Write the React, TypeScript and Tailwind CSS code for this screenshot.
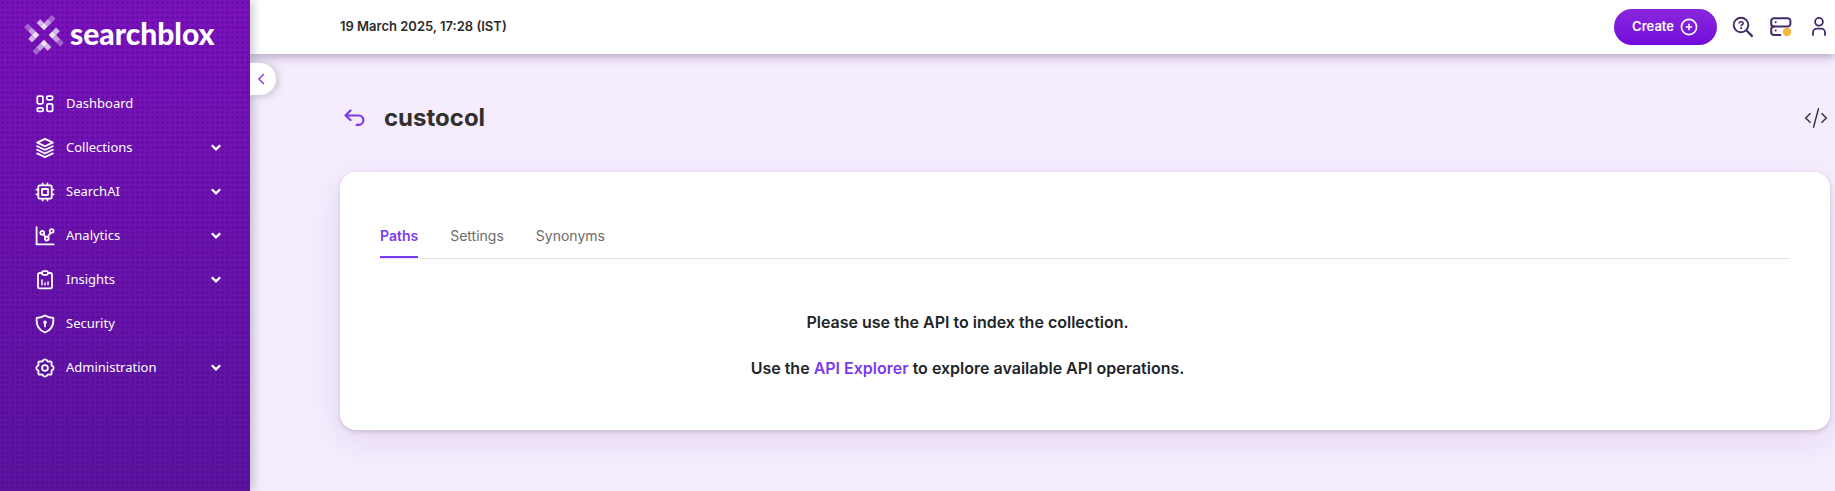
import { useState } from "react";
import type { ReactNode } from "react";

function NavIcon({ children }: { children: ReactNode }) {
  return (
    <svg
      viewBox="0 0 20 20"
      className="size-5 shrink-0"
      fill="none"
      stroke="currentColor"
      strokeWidth="1.8"
      strokeLinecap="round"
      strokeLinejoin="round"
      aria-hidden="true"
    >
      {children}
    </svg>
  );
}

const gear =
  "M8.4 1.900Q10 .9 11.600 1.900L12.600 3.300Q13 3.700 13.600 3.500L15 3.300Q16.700 3.300 16.700 5L16.500 6.400Q16.300 7 16.700 7.400L18.100 8.400Q19.100 10 18.100 11.600L16.700 12.600Q16.300 13 16.500 13.600L16.700 15Q16.700 16.700 15 16.700L13.600 16.500Q13 16.300 12.600 16.700L11.600 18.100Q10 19.100 8.400 18.100L7.400 16.700Q7 16.300 6.400 16.500L5 16.700Q3.300 16.700 3.300 15L3.500 13.600Q3.700 13 3.300 12.600L1.900 11.600Q.9 10 1.900 8.400L3.300 7.400Q3.700 7 3.500 6.400L3.300 5Q3.300 3.300 5 3.300L6.400 3.500Q7 3.700 7.400 3.300Z";

const items: { label: string; expandable: boolean; icon: ReactNode }[] = [
  {
    label: "Dashboard",
    expandable: false,
    icon: (
      <>
        <rect x="2.3" y="2.2" width="5.600" height="7.600" rx="1.200" />
        <rect x="11.800" y="2.2" width="5.800" height="3.600" rx="1.200" />
        <rect x="2.3" y="13.800" width="5.800" height="3.600" rx="1.200" />
        <rect x="12" y="9.800" width="5.600" height="7.600" rx="1.200" />
      </>
    ),
  },
  {
    label: "Collections",
    expandable: true,
    icon: (
      <>
        <path d="M10 .9 2.200 4.600 10 8.300l7.800-3.700z" />
        <path d="M2.200 8.200 10 11.900l7.800-3.700M2.200 11.800 10 15.500l7.800-3.700M2.200 15.400 10 19.100l7.800-3.700" />
      </>
    ),
  },
  {
    label: "SearchAI",
    expandable: true,
    icon: (
      <>
        <rect x="3.300" y="3.300" width="13.400" height="13.400" rx="1.600" />
        <rect x="7" y="7" width="6" height="6" rx=".4" />
        <path d="M7.600 3V1.400M12.400 3V1.400M7.600 18.600V17M12.400 18.600V17M3 7.600H1.400M3 12.400H1.400M18.600 7.600H17M18.600 12.400H17" />
      </>
    ),
  },
  {
    label: "Analytics",
    expandable: true,
    icon: (
      <>
        <path d="M1.600 1.200v17.200h17" />
        <circle cx="7.200" cy="6.800" r="1.900" />
        <circle cx="11.800" cy="12.600" r="1.900" />
        <circle cx="16.600" cy="5" r="1.900" />
        <path d="m8.400 8.400 2.300 2.600M12.800 10.800l2.800-4" />
      </>
    ),
  },
  {
    label: "Insights",
    expandable: true,
    icon: (
      <>
        <path d="M7 3H4.600A1.600 1.600 0 0 0 3 4.600v12.200a1.600 1.600 0 0 0 1.600 1.600h10.800a1.600 1.600 0 0 0 1.600-1.600V4.600A1.600 1.600 0 0 0 15.400 3H13" />
        <rect x="7" y="1.200" width="6" height="3.600" rx="1.800" />
        <path d="M7 10v4.800M10 13v1.800M13 12v2.800" strokeWidth="1.500" />
      </>
    ),
  },
  {
    label: "Security",
    expandable: false,
    icon: (
      <>
        <path d="M10 1.500c2.500 1.700 5 2.300 8.300 2.500.6 6.400-1.500 12-8.300 14.500C3.200 16 1.100 10.400 1.700 4 5 3.800 7.500 3.200 10 1.500z" />
        <circle cx="10" cy="8.200" r="1.800" fill="currentColor" stroke="none" />
        <path d="M10 9v3.400" />
      </>
    ),
  },
  {
    label: "Administration",
    expandable: true,
    icon: (
      <>
        <path d={gear} />
        <circle cx="10" cy="10" r="2.900" />
      </>
    ),
  },
];

function LogoMark() {
  return (
    <svg viewBox="-20 -20 40 40" className="size-10 shrink-0" fill="#fff" aria-hidden="true">
      {[0, 90, 180, 270].map((angle) => (
        <g key={angle} transform={`rotate(${angle})`}>
          <path d="M0-4.700-3.700-8.400 0-12.100 3.700-8.400z" opacity=".88" />
          <path d="M-3.700-8.400-7.400-12.100-3.700-15.800 0-12.100z" opacity=".7" />
          <path d="M3.700-8.400 0-12.100 3.900-16 7.600-12.300z" opacity=".6" />
          <path d="M7.600-12.300 3.900-16 7.800-19.900 11.500-16.200z" opacity=".35" />
        </g>
      ))}
    </svg>
  );
}

function Sidebar() {
  return (
    <aside className="relative z-20 w-[250px] shrink-0 bg-[radial-gradient(circle_at_center,rgba(70,0,150,0.4)_0_1px,transparent_1.5px),linear-gradient(#7a12ba,#5a149c)] bg-[size:5px_5px,100%_100%] text-white shadow-[2px_0_10px_rgba(0,0,0,0.25)]">
      <a href="#" aria-label="searchblox home" className="flex h-[70px] items-center gap-1.5 pl-6">
        <LogoMark />
        <span className="pb-1 font-['Lato',sans-serif] text-[30px] leading-9 font-black">searchblox</span>
      </a>
      <nav aria-label="Main" className="pt-3">
        <ul>
          {items.map((item) => (
            <li key={item.label}>
              <button
                type="button"
                className="flex h-11 w-full items-center gap-[11px] pr-7 pl-[35px] text-left font-['Noto_Sans',sans-serif] text-[13px]"
              >
                <NavIcon>{item.icon}</NavIcon>
                <span className="flex-1">{item.label}</span>
                {item.expandable && (
                  <svg viewBox="0 0 12 12" className="size-3" fill="none" stroke="currentColor" strokeWidth="2.200" aria-hidden="true">
                    <path d="m1.800 3.200 4.200 4.200 4.200-4.200" />
                  </svg>
                )}
              </button>
            </li>
          ))}
        </ul>
      </nav>
    </aside>
  );
}

function Header() {
  return (
    <header className="relative z-10 flex h-[54px] items-center justify-between bg-white pr-1 pl-[90px] shadow-[0_2px_10px_rgba(30,0,60,0.35)]">
      <time className="text-[13px] font-semibold text-[#2b2b2b]">19 March 2025, 17:28 (IST)</time>
      <div className="flex items-center text-[#432c6b]">
        <button
          type="button"
          className="mr-3.5 flex h-9 items-center gap-1.5 rounded-full bg-linear-to-b from-[#8a25dc] to-[#7309dc] pr-[19px] pl-[18px] text-[13px] font-semibold text-white"
        >
          Create
          <svg viewBox="0 0 18 18" className="size-[18px]" fill="none" stroke="currentColor" strokeWidth="1.600" aria-hidden="true">
            <circle cx="9" cy="9" r="7.600" />
            <path d="M9 5.800v6.400M5.800 9h6.400" />
          </svg>
        </button>
        <button type="button" aria-label="Search help" className="mr-3.5">
          <svg viewBox="0 0 24 24" className="size-6" fill="none" stroke="currentColor" strokeWidth="1.900" aria-hidden="true">
            <circle cx="10" cy="10" r="7.300" />
            <path d="m15.300 15.300 6.300 6.300" strokeWidth="2.200" />
            <path d="M8.100 8.500c0-2.300 4-2.300 4 0 0 1.300-2 1.200-2 2.700" strokeWidth="1.600" />
            <path d="M9.200 12.300H11V14H9.200z" fill="currentColor" stroke="none" />
          </svg>
        </button>
        <button type="button" aria-label="Server status" className="mr-3.5">
          <svg viewBox="0 0 24 24" className="size-6" fill="none" stroke="currentColor" strokeWidth="2" strokeLinecap="round" aria-hidden="true">
            <path d="M5 11.500a2.800 2.800 0 0 1-2.800-2.800V6A2.800 2.800 0 0 1 5 3.200h13.600A2.800 2.800 0 0 1 21.400 6v2.700a2.800 2.800 0 0 1-2.800 2.800z" />
            <path d="M5 11.500a2.800 2.800 0 0 0-2.800 2.800v2.900A2.800 2.800 0 0 0 5 20h6.400" />
            <path d="M6.600 7.300h.1M6.600 15.600h.1" strokeWidth="2" />
            <circle cx="18" cy="17" r="4.200" fill="#f4b740" stroke="none" />
          </svg>
        </button>
        <button type="button" aria-label="Account">
          <svg viewBox="0 0 24 24" className="size-6" fill="none" stroke="currentColor" strokeWidth="1.800" strokeLinecap="round" aria-hidden="true">
            <circle cx="12" cy="6.800" r="3.900" />
            <path d="M6 20v-2.500a3.800 3.800 0 0 1 3.800-3.800h4.400a3.800 3.800 0 0 1 3.800 3.800V20" />
          </svg>
        </button>
      </div>
    </header>
  );
}

const tabs = ["Paths", "Settings", "Synonyms"];

export default function App() {
  const [active, setActive] = useState("Paths");
  return (
    <div className="flex min-h-screen bg-[#f5ecfe] font-['Inter',sans-serif]">
      <Sidebar />
      <div className="relative min-w-0 flex-1">
        <Header />
        <button
          type="button"
          aria-label="Collapse menu"
          className="absolute top-[63px] left-0 z-30 flex h-8 w-[26px] items-center justify-center rounded-r-full bg-white pr-1 text-[#9333d8] shadow-[2px_1px_8px_rgba(0,0,0,0.2)]"
        >
          <svg viewBox="0 0 12 12" className="size-3" fill="none" stroke="currentColor" strokeWidth="1.400" aria-hidden="true">
            <path d="M8.900 1 3.900 6l5 5" />
          </svg>
        </button>
        <main className="pr-[5px] pb-12 pl-[90px]">
          <div className="flex h-[118px] items-center pt-2.5 pl-1">
            <a href="#" aria-label="Back" className="mr-4 text-[#7c3aed]">
              <svg viewBox="0 0 24 24" className="size-6" fill="none" stroke="currentColor" strokeWidth="2.200" strokeLinecap="round" strokeLinejoin="round" aria-hidden="true">
                <path d="M6.500 4.500 1.500 9.500l5 4.500M1.500 9.500h13.200a4.700 4.700 0 0 1 0 9.400h-2" />
              </svg>
            </a>
            <h1 className="flex-1 text-2xl font-bold text-[#303030]">custocol</h1>
            <button type="button" aria-label="View code" className="mr-0.5 text-[#303030]">
              <svg viewBox="0 0 24 24" className="size-6" fill="none" stroke="currentColor" strokeWidth="1.400" aria-hidden="true">
                <path d="M6.500 7.200 1.700 12l4.800 4.800M17.500 7.200l4.800 4.800-4.800 4.800M14.600 2.200 9.400 21.800" />
              </svg>
            </button>
          </div>
          <section className="rounded-2xl bg-white px-10 pt-11 pb-[50px] shadow-[0_10px_36px_rgba(60,20,100,0.09),0_2px_4px_rgba(60,40,80,0.18)]">
            <div role="tablist" className="flex gap-8 border-b border-[#e3e3e3] text-sm">
              {tabs.map((tab) => (
                <button
                  key={tab}
                  type="button"
                  role="tab"
                  aria-selected={active === tab}
                  onClick={() => setActive(tab)}
                  className={
                    active === tab
                      ? "h-[42px] border-b-2 border-[#7c3aed] font-semibold text-[#7c3aed]"
                      : "h-[42px] border-b-2 border-transparent text-[#6b6b6b]"
                  }
                >
                  {tab}
                </button>
              ))}
            </div>
            <div className="w-5/6 pt-[51px] text-center text-base font-semibold text-[#212529]">
              <p>Please use the API to index the collection.</p>
              <p className="mt-[22px]">
                Use the{" "}
                <a href="#" className="text-[#7c3aed]">
                  API Explorer
                </a>{" "}
                to explore available API operations.
              </p>
            </div>
          </section>
        </main>
      </div>
    </div>
  );
}
